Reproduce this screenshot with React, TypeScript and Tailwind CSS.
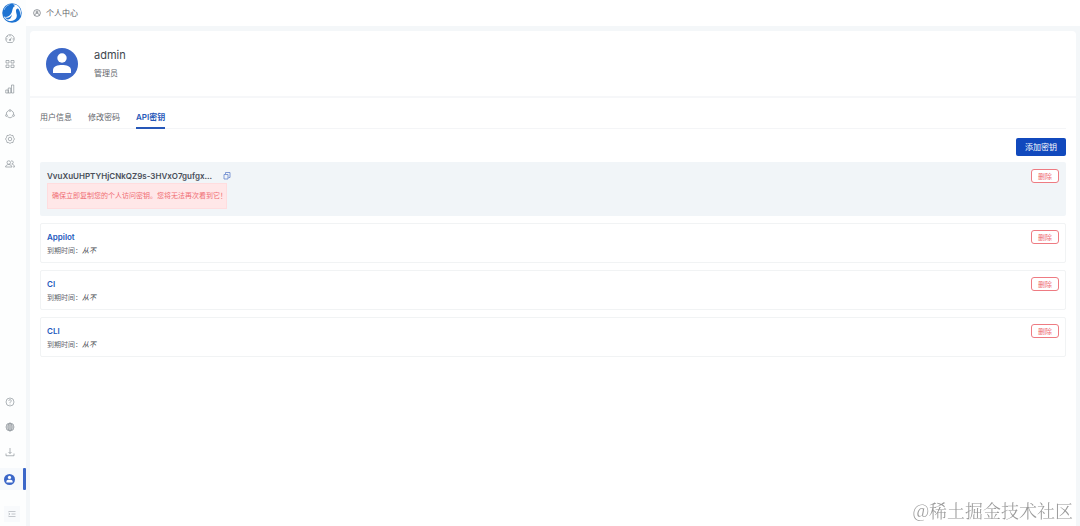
// PersonalCenter.tsx
import { useState } from 'react';
import type { ReactNode } from 'react';

interface ApiKey {
  id: string;
  name: string;
  expires: string;
}

const apiKeys: ApiKey[] = [
  { id: 'appilot', name: 'Appilot', expires: '从不' },
  { id: 'ci', name: 'CI', expires: '从不' },
  { id: 'cli', name: 'CLI', expires: '从不' },
];

const tabs = ['用户信息', '修改密码', 'API密钥'];

function Icon({ children }: { children: ReactNode }) {
  return (
    <svg viewBox="0 0 20 20" className="size-[10px]" fill="none" stroke="currentColor" strokeWidth="1.3" strokeLinejoin="round" aria-hidden="true">
      {children}
    </svg>
  );
}

function Logo() {
  return (
    <svg viewBox="0 0 40 40" className="size-5 shrink-0" aria-hidden="true">
      <circle cx="20" cy="20" r="19.500" fill="#1d73d2" />
      <path
        d="M22 4c4-2 9 0 12 4 4 5 5 12 2 18 1-7-1-12-4-15-3 0-4 2-4 5 0 5 3 8 1 13-2 5-8 8-14 7-5-1-9-4-12-9 6 2 11 0 14-4 4-5 3-9 5-13 1-2 2-3 4-4-1-1-2-2-4-2Z"
        fill="#fff"
      />
      <path d="M5 28c6 3 12 1 15-5-1 6-4 10-9 10-2-1-4-3-6-5Z" fill="#1d73d2" />
      <path d="M4 14C6 8 10 5 15 3" fill="none" stroke="#fff" strokeWidth="1" />
    </svg>
  );
}

function Avatar({ className }: { className: string }) {
  return (
    <svg viewBox="0 0 32 32" className={className} aria-hidden="true">
      <circle cx="16" cy="16" r="16" fill="#3b67c8" />
      <circle cx="16" cy="10" r="4.700" fill="#fff" />
      <path d="M7 25v-3c0-4 5-5 9-5s9 1 9 5v3Z" fill="#fff" />
    </svg>
  );
}

const mainMenu = [
  {
    label: '仪表盘',
    icon: (
      <Icon>
        <path d="M5.500 17a8.500 8.500 0 1 1 9 0ZM10 12l3-5M10 2v3M2 10h3M15 10h3M4.500 4.500l2 2" />
        <circle cx="10" cy="12" r="1.500" />
      </Icon>
    ),
  },
  {
    label: '应用',
    icon: (
      <Icon>
        <path d="M2 3h6v5H2ZM12 3h6v5h-6ZM2 12h6v5H2ZM12 12h6v5h-6Z" />
      </Icon>
    ),
  },
  {
    label: '统计',
    icon: (
      <Icon>
        <path d="M1.500 12h5v6h-5ZM6.500 8h5v10h-5ZM13 2h4.500v16H13Z" />
      </Icon>
    ),
  },
  {
    label: '部署',
    icon: (
      <Icon>
        <path d="M7.500 3a8 8 0 0 0-5 8M12.500 3a8 8 0 0 1 5 8M5 15.500a7.500 7.500 0 0 0 10 0" />
        <circle cx="10" cy="3" r="1.800" />
        <circle cx="3" cy="13" r="1.800" />
        <circle cx="17" cy="13" r="1.800" />
      </Icon>
    ),
  },
  {
    label: '设置',
    icon: (
      <Icon>
        <path d="m10 1 2.500 1.800 3.500.2.800 3.500L19 10l-2.200 3.500-.8 3.500-3.500.2L10 19l-2.500-1.800L4 17l-.8-3.500L1 10l2.200-3.500L4 3l3.500-.2Z" />
        <circle cx="10" cy="10" r="3.500" />
      </Icon>
    ),
  },
  {
    label: '用户',
    icon: (
      <Icon>
        <circle cx="7.500" cy="7" r="3.500" />
        <path d="M1 16c.5-3 3-5 6.500-5s6 2 6.500 5ZM12 4c3-1 5 1 4.500 3.500-.3 1.500-1.500 2.500-3 2.500 3 0 5 2.500 5.500 6h-3" />
      </Icon>
    ),
  },
];

const bottomMenu = [
  {
    label: '帮助',
    icon: (
      <Icon>
        <circle cx="10" cy="10" r="8" />
        <path d="M7.500 8c0-3.500 5-3.500 5-.5 0 2-2.500 2-2.500 4.500M10 13.500V15" />
      </Icon>
    ),
  },
  {
    label: '语言',
    icon: (
      <Icon>
        <circle cx="10" cy="10" r="8" />
        <ellipse cx="10" cy="10" rx="4" ry="8" />
        <path d="M10 2v16M2 10h16M3.500 6h13M3.500 14h13" />
      </Icon>
    ),
  },
  {
    label: '下载',
    icon: (
      <Icon>
        <path d="M10 2v11M7 10l3 3 3-3M2 13v4.500h16V13" />
      </Icon>
    ),
  },
];

function MenuLink({ label, children }: { label: string; children: ReactNode }) {
  return (
    <a href="#" aria-label={label} className="flex h-[25px] items-center pl-[5px] text-[#858c93]">
      {children}
    </a>
  );
}

function DeleteButton() {
  return (
    <button type="button" className="h-[14px] w-7 shrink-0 rounded-[3px] border border-[#ee7b82] bg-white text-[7px] leading-none text-[#ee6871]">
      删除
    </button>
  );
}

export default function PersonalCenter() {
  const [activeTab, setActiveTab] = useState('API密钥');

  return (
    <div lang="zh-CN" className="flex min-h-screen bg-white font-[Inter,'Noto_Sans_CJK_SC',sans-serif] text-[8px] text-[#5f656c]">
      {/* Sidebar */}
      <nav className="flex w-[26px] shrink-0 flex-col bg-[#fdfefe]">
        <div className="flex h-[26px] items-center pl-[2px]">
          <Logo />
        </div>
        {mainMenu.map((item) => (
          <MenuLink key={item.label} label={item.label}>{item.icon}</MenuLink>
        ))}
        <div className="grow"></div>
        {bottomMenu.map((item) => (
          <MenuLink key={item.label} label={item.label}>{item.icon}</MenuLink>
        ))}
        <a href="#" aria-label="个人中心" className="mt-1 flex h-[22px] items-center justify-between bg-[#f6f9fc] pl-1">
          <Avatar className="size-[11px]" />
          <span className="h-[22px] w-[3px] rounded-[1px] bg-[#3b67c8]"></span>
        </a>
        <button type="button" aria-label="展开菜单" className="mt-4 mb-1 ml-1 flex h-4 w-4 items-center justify-center bg-[#f8fafc] text-[#a5abb1]">
          <Icon>
            <path d="M3 5h14M9 10h8M3 15h14M3 8l3 2-3 2" />
          </Icon>
        </button>
      </nav>

      <div className="flex min-w-0 grow flex-col">
        {/* Breadcrumb */}
        <header className="flex h-[26px] items-center gap-[5px] pl-[7px]">
          <svg viewBox="0 0 20 20" className="size-2" fill="none" stroke="currentColor" strokeWidth="1.600" aria-hidden="true">
            <circle cx="10" cy="10" r="8.500" />
            <circle cx="10" cy="7.500" r="2.500" />
            <path d="M5 16c0-4 2-5.500 5-5.500s5 1.500 5 5.500" />
          </svg>
          <span>个人中心</span>
        </header>

        <div className="flex grow flex-col bg-[#f4f7f9] pt-[5px] pr-1 pl-1">
          <main className="grow rounded-t-sm bg-white">
            {/* User info */}
            <section className="flex h-[67px] items-center gap-4 border-b-2 border-[#f6f7f9] pl-4">
              <Avatar className="size-8" />
              <div>
                <h1 className="text-[11px] leading-4 text-[#41474e]">admin</h1>
                <p className="mt-[2px] leading-4">管理员</p>
              </div>
            </section>

            <section className="px-[10px] pt-[9px]">
              <div role="tablist" className="flex h-[22px] gap-4 border-b border-[#f4f5f7]">
                {tabs.map((tab) => (
                  <button
                    key={tab}
                    type="button"
                    role="tab"
                    aria-selected={activeTab === tab}
                    onClick={() => setActiveTab(tab)}
                    className={`h-[22px] border-b-2 ${activeTab === tab ? 'border-[#2657b8] font-semibold text-[#2657b8]' : 'border-transparent'}`}
                  >
                    {tab}
                  </button>
                ))}
              </div>

              <div className="flex justify-end pt-[9px] pb-1.5">
                <button type="button" className="h-[18px] w-[50px] rounded-[2px] bg-[#1149bd] text-white">添加密钥</button>
              </div>

              {/* Newly created key */}
              <div className="flex h-[54px] items-start justify-between rounded-[2px] bg-[#f1f5f8] px-[7px] pt-[7px]">
                <div>
                  <div className="flex h-[14px] items-center gap-[11px]">
                    <span className="font-semibold text-[#484e58]">VvuXuUHPTYHjCNkQZ9s-3HVxO7gufgx...</span>
                    <button type="button" aria-label="复制" className="text-[#5b7cc9]">
                      <svg viewBox="0 0 16 16" className="size-2" fill="none" stroke="currentColor" strokeWidth="1.500" aria-hidden="true">
                        <path d="M2 5h8v9H2ZM5 4V1h9v10h-3" />
                      </svg>
                    </button>
                  </div>
                  <p className="flex h-[26px] w-[180px] items-center border border-[#ffdddf] bg-[#ffe7e8] pl-1 text-[7px] whitespace-nowrap text-[#f06d73]">
                    确保立即复制您的个人访问密钥。您将无法再次看到它！
                  </p>
                </div>
                <DeleteButton />
              </div>

              {/* Existing keys */}
              <ul className="mt-[7px] flex flex-col gap-[7px]">
                {apiKeys.map((key) => (
                  <li key={key.id} className="flex h-10 items-start justify-between rounded-[2px] border border-[#f1f3f4] px-1.5 pt-1.5">
                    <div>
                      <h2 className="leading-[14px] font-semibold text-[#2259bd]">{key.name}</h2>
                      <p className="text-[7px] leading-[13px]">
                        到期时间：<em className="text-[#3f444a]">{key.expires}</em>
                      </p>
                    </div>
                    <DeleteButton />
                  </li>
                ))}
              </ul>
            </section>
          </main>
        </div>
      </div>

      {/* Watermark */}
      <div className="pointer-events-none fixed right-[7px] bottom-1 font-['Noto_Serif_CJK_SC','Noto_Sans_CJK_SC',serif] text-[18px] leading-6 font-light text-[#999]">
        @稀土掘金技术社区
      </div>
    </div>
  );
}
